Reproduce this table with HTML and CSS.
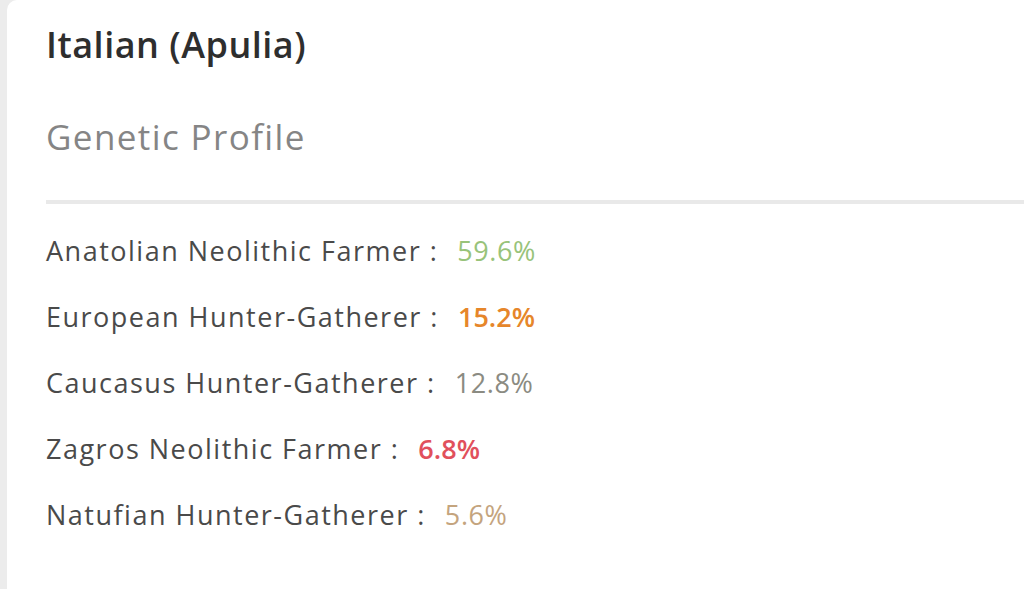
FILE: index.html
```html
<!DOCTYPE html>
<html lang="en">
<head>
<meta charset="utf-8">
<title>Italian (Apulia)</title>
<link rel="stylesheet" href="styles.css">
</head>
<body>
<main class="card">
  <h1 class="title">Italian (Apulia)</h1>
  <h2 class="subtitle">Genetic Profile</h2>
  <hr class="divider">
  <ul class="profile">
    <li class="row"><span class="label">Anatolian Neolithic Farmer :</span><span class="pct pct-green">59.6%</span></li>
    <li class="row"><span class="label">European Hunter-Gatherer :</span><span class="pct pct-orange">15.2%</span></li>
    <li class="row"><span class="label">Caucasus Hunter-Gatherer :</span><span class="pct pct-grey">12.8%</span></li>
    <li class="row"><span class="label">Zagros Neolithic Farmer :</span><span class="pct pct-red">6.8%</span></li>
    <li class="row"><span class="label">Natufian Hunter-Gatherer :</span><span class="pct pct-tan">5.6%</span></li>
  </ul>
</main>
</body>
</html>
```
FILE: styles.css
```css
html, body {
  margin: 0;
  padding: 0;
  height: 100%;
}
body {
  background: #ececec;
  font-family: "Open Sans", "DejaVu Sans", sans-serif;
  overflow: hidden;
}
.card {
  margin-left: 7px;
  min-height: 100%;
  background: #ffffff;
  border-top-left-radius: 10px;
  padding: 25px 0 0 39px;
  box-sizing: border-box;
}
.title {
  margin: 0;
  font-size: 36px;
  line-height: 40px;
  font-weight: 600;
  letter-spacing: 0.5px;
  color: #2e2e2e;
}
.subtitle {
  margin: 52px 0 0;
  font-size: 35px;
  line-height: 40px;
  font-weight: 400;
  letter-spacing: 1.4px;
  color: #858585;
}
.divider {
  margin: 43px 0 0;
  border: 0;
  height: 4px;
  background: #e9e9e9;
}
.profile {
  list-style: none;
  margin: 27px 0 0;
  padding: 0;
  display: flex;
  flex-direction: column;
  gap: 26px;
}
.row {
  display: flex;
  align-items: center;
  gap: 19px;
  font-size: 27px;
  line-height: 40px;
  font-weight: 500;
  color: #4a4a4a;
}
.label { letter-spacing: 1.5px; }
.pct { font-weight: 500; letter-spacing: 0.6px; }
.pct-green { color: #98c37a; }
.pct-orange { color: #e6862a; font-weight: 600; letter-spacing: 0; }
.pct-grey { color: #8b8b82; }
.pct-red { color: #e1505c; font-weight: 600; letter-spacing: 0; }
.pct-tan { color: #c4a47e; }
```
